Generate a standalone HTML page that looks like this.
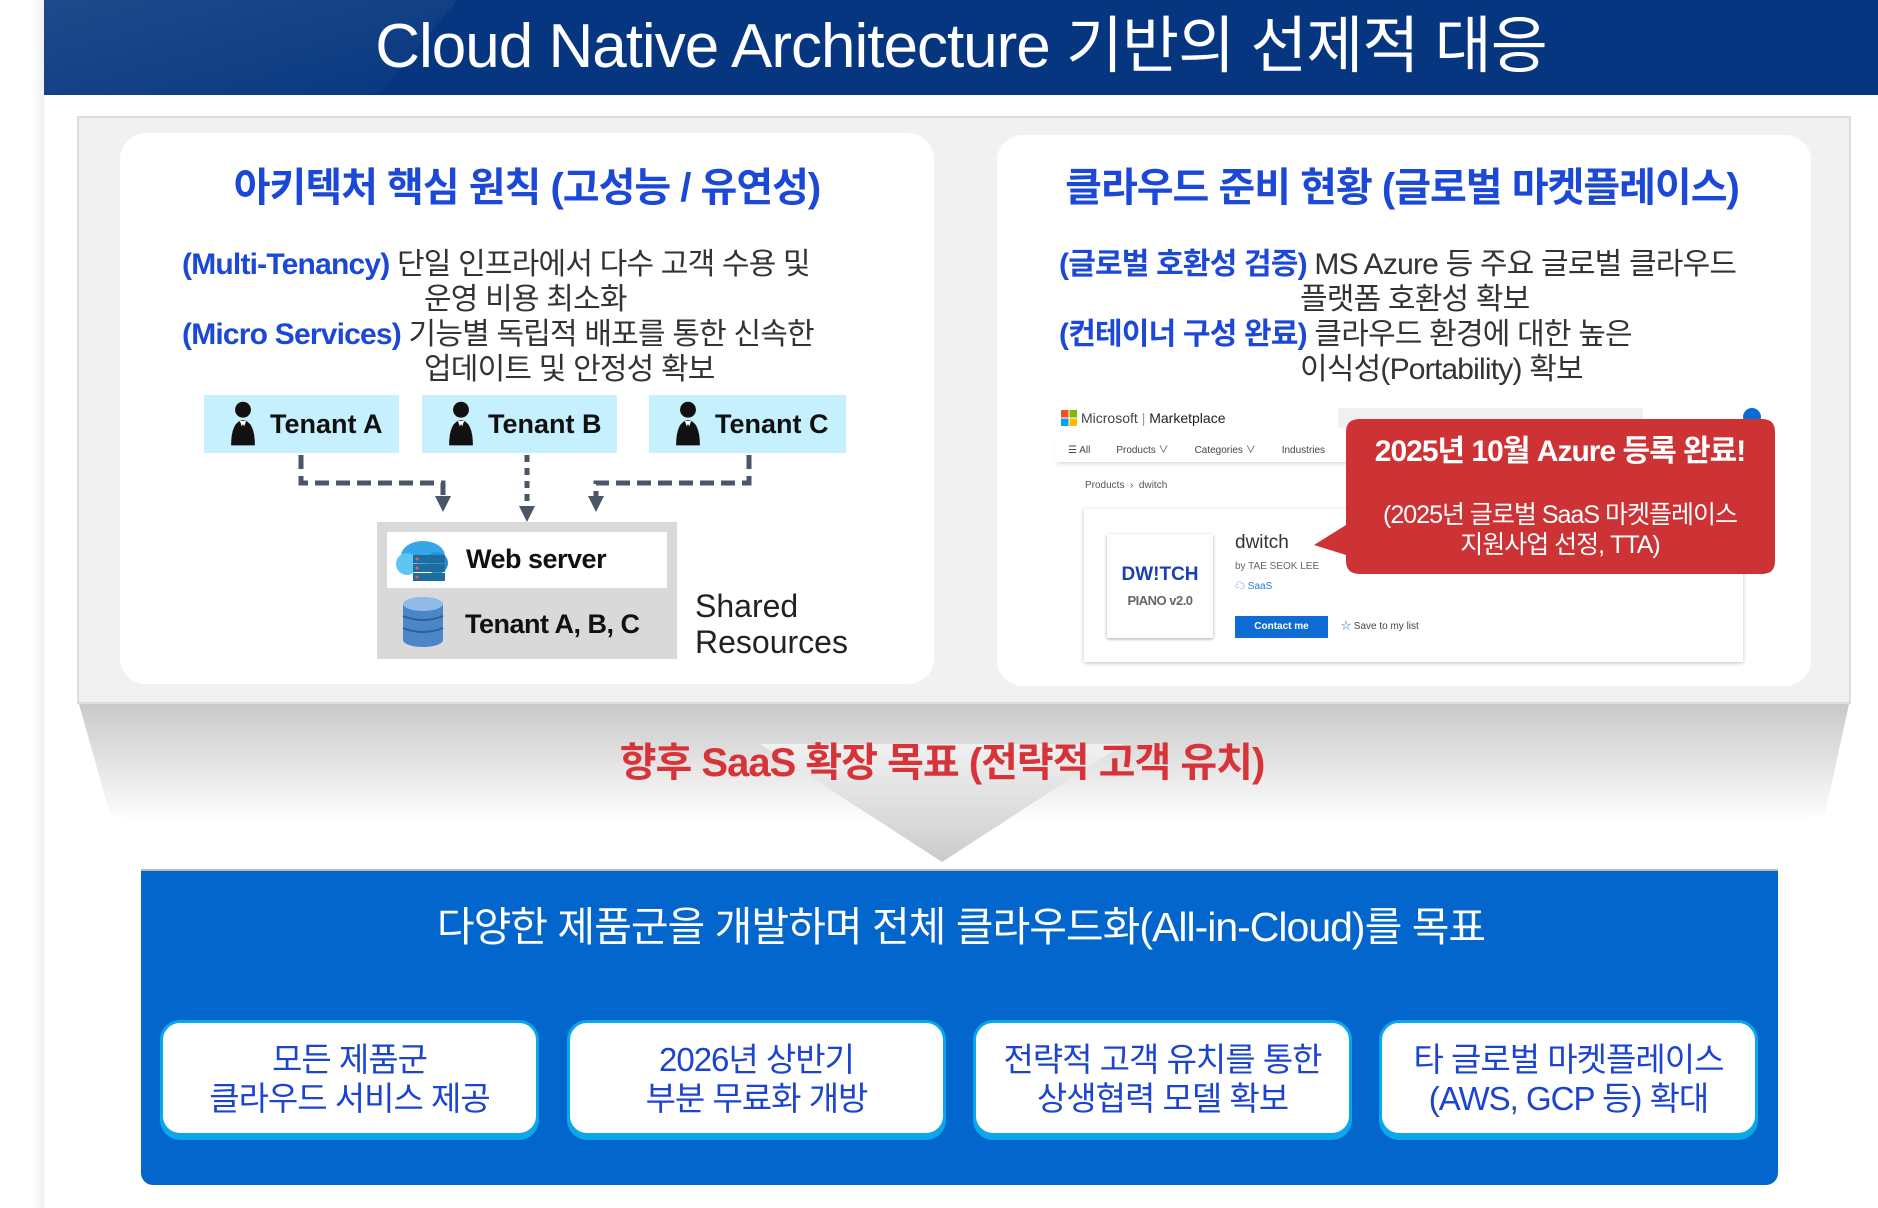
<!DOCTYPE html>
<html><head><meta charset="utf-8"><style>
*{margin:0;padding:0;box-sizing:border-box}
body{width:1878px;height:1208px;background:#fff;position:relative;overflow:hidden;font-family:"Liberation Sans","Noto Sans CJK KR",sans-serif}
.a{position:absolute}
.t{position:absolute;white-space:nowrap;line-height:1}
.c{transform:translateX(-50%)}
.blue{color:#1b48d6;font-weight:bold}
.g{color:#333}
.tenant{position:absolute;top:395px;height:58px;background:#c6f0fd;font-weight:bold;font-size:27px;color:#111;display:flex;align-items:center;padding-left:22px;gap:10px}
.box{position:absolute;top:1020px;width:379px;height:116px;background:#fff;border:3px solid #0aa7ea;border-radius:20px;box-shadow:0 4px 0 #0aa7ea;color:#1c44cf;font-size:33px;text-align:center;line-height:39px;padding-top:17px;letter-spacing:-1px}
</style></head><body>
<div class="a" style="left:0;top:0;width:44px;height:1208px;background:linear-gradient(90deg,#fff 70%,#f0f0f0)"></div>
<div class="a" style="left:44px;top:0;width:1834px;height:95px;background:#06367f;overflow:hidden">
 <div class="a" style="left:-40px;top:-60px;width:420px;height:200px;background:linear-gradient(160deg,rgba(255,255,255,.12),rgba(255,255,255,0));transform:skewX(-40deg)"></div>
</div>
<div class="t c" style="left:961px;top:16px;font-size:62px;color:#fff;letter-spacing:-1px">Cloud Native Architecture 기반의 선제적 대응</div>

<div class="a" style="left:77px;top:116px;width:1774px;height:588px;background:#f1f1f1;border:2px solid #dcdcdc"></div>
<div class="a" style="left:120px;top:133px;width:814px;height:551px;background:#fff;border-radius:26px"></div>
<div class="a" style="left:997px;top:135px;width:814px;height:551px;background:#fff;border-radius:26px"></div>

<div class="t c blue" style="left:527px;top:168px;font-size:40px;letter-spacing:-1px">아키텍처 핵심 원칙 (고성능 / 유연성)</div>
<div class="t" style="left:182px;top:250px;font-size:30px;letter-spacing:-.8px"><span class="blue">(Multi-Tenancy)</span> <span class="g">단일 인프라에서 다수 고객 수용 및</span></div>
<div class="t g" style="left:424px;top:285px;font-size:30px;letter-spacing:-.8px">운영 비용 최소화</div>
<div class="t" style="left:182px;top:320px;font-size:30px;letter-spacing:-.8px"><span class="blue">(Micro Services)</span> <span class="g">기능별 독립적 배포를 통한 신속한</span></div>
<div class="t g" style="left:424px;top:355px;font-size:30px;letter-spacing:-.8px">업데이트 및 안정성 확보</div>

<svg width="0" height="0" style="position:absolute"><defs><symbol id="p" viewBox="0 0 34 58"><circle cx="17" cy="11" r="10" fill="#111"/><path d="M2 56 Q2 26 17 24 Q32 26 32 56 Z" fill="#111"/><path d="M13 25 L17 36 L21 25 Z" fill="#fff"/><path d="M16 30 L18 30 L19 46 L17 49 L15 46 Z" fill="#111"/></symbol></defs></svg>
<div class="tenant" style="left:204px;width:195px"><svg width="34" height="46"><use href="#p"/></svg>Tenant A</div>
<div class="tenant" style="left:422px;width:195px"><svg width="34" height="46"><use href="#p"/></svg>Tenant B</div>
<div class="tenant" style="left:649px;width:197px"><svg width="34" height="46"><use href="#p"/></svg>Tenant C</div>

<svg class="a" style="left:0;top:0" width="1878" height="700">
 <g stroke="#4a5568" stroke-width="5" fill="none">
  <path d="M301 455 V483 H443 V498" stroke-dasharray="14 7"/>
  <path d="M527 455 V510" stroke-dasharray="7 6"/>
  <path d="M749 455 V483 H596 V498" stroke-dasharray="14 7"/>
 </g>
 <g fill="#4a5568"><path d="M435 496 L451 496 L443 512Z"/><path d="M519 506 L535 506 L527 522Z"/><path d="M588 496 L604 496 L596 512Z"/></g>
</svg>

<div class="a" style="left:377px;top:522px;width:300px;height:137px;background:#d9d9d9"></div>
<div class="a" style="left:387px;top:532px;width:280px;height:56px;background:#fff"></div>
<svg class="a" style="left:393px;top:538px" width="58" height="46"><ellipse cx="30" cy="18" rx="22" ry="15" fill="#35a6e8"/><circle cx="14" cy="26" r="11" fill="#5ec4f2"/><circle cx="44" cy="25" r="11" fill="#2a8fd6"/><rect x="20" y="17" width="32" height="8" fill="#1d6e9e"/><rect x="20" y="26" width="32" height="8" fill="#1d6e9e"/><rect x="20" y="35" width="32" height="8" fill="#1d6e9e"/><g fill="#f55"><circle cx="24" cy="21" r="1.5"/><circle cx="24" cy="30" r="1.5"/><circle cx="24" cy="39" r="1.5"/></g></svg>
<div class="t" style="left:466px;top:546px;font-size:27px;font-weight:bold;color:#111;letter-spacing:-.5px">Web server</div>
<svg class="a" style="left:401px;top:596px" width="44" height="54"><g fill="#4a86c8"><ellipse cx="22" cy="44" rx="20" ry="7"/><rect x="2" y="8" width="40" height="36"/></g><ellipse cx="22" cy="8" rx="20" ry="7" fill="#8fb9e6"/><g stroke="#2e5f99" stroke-width="2" fill="none"><path d="M2 20 Q22 28 42 20"/><path d="M2 32 Q22 40 42 32"/></g></svg>
<div class="t" style="left:465px;top:611px;font-size:27px;font-weight:bold;color:#111;letter-spacing:-.5px">Tenant A, B, C</div>
<div class="t" style="left:695px;top:588px;font-size:32px;color:#222;line-height:36px">Shared<br>Resources</div>

<div class="t c blue" style="left:1402px;top:168px;font-size:40px;letter-spacing:-1px">클라우드 준비 현황 (글로벌 마켓플레이스)</div>
<div class="t" style="left:1059px;top:250px;font-size:30px;letter-spacing:-.8px"><span class="blue">(글로벌 호환성 검증)</span> <span class="g">MS Azure 등 주요 글로벌 클라우드</span></div>
<div class="t g" style="left:1300px;top:285px;font-size:30px;letter-spacing:-.8px">플랫폼 호환성 확보</div>
<div class="t" style="left:1059px;top:320px;font-size:30px;letter-spacing:-.8px"><span class="blue">(컨테이너 구성 완료)</span> <span class="g">클라우드 환경에 대한 높은</span></div>
<div class="t g" style="left:1300px;top:355px;font-size:30px;letter-spacing:-.8px">이식성(Portability) 확보</div>

<svg class="a" style="left:1061px;top:410px" width="16" height="16"><rect width="7.5" height="7.5" fill="#f25022"/><rect x="8.5" width="7.5" height="7.5" fill="#7fba00"/><rect y="8.5" width="7.5" height="7.5" fill="#00a4ef"/><rect x="8.5" y="8.5" width="7.5" height="7.5" fill="#ffb900"/></svg>
<div class="t" style="left:1081px;top:411px;font-size:14px;color:#444">Microsoft <span style="color:#999">|</span> <span style="color:#222">Marketplace</span></div>
<div class="a" style="left:1338px;top:408px;width:305px;height:20px;background:#f0f0f0"></div>
<div class="a" style="left:1743px;top:408px;width:18px;height:18px;border-radius:50%;background:#0a6cd6"></div>
<div class="a" style="left:1055px;top:430px;width:300px;height:32px;box-shadow:0 4px 4px -2px #ddd"></div>
<div class="t" style="left:1068px;top:446px;font-size:10px;color:#444">☰ All<span style="margin-left:26px">Products ∨</span><span style="margin-left:26px">Categories ∨</span><span style="margin-left:26px">Industries</span></div>
<div class="t" style="left:1085px;top:481px;font-size:10px;color:#555">Products &nbsp;›&nbsp; dwitch</div>
<div class="a" style="left:1084px;top:509px;width:659px;height:153px;background:#fff;box-shadow:0 1px 4px rgba(0,0,0,.25)"></div>
<div class="a" style="left:1107px;top:534px;width:106px;height:104px;background:#fff;box-shadow:0 1px 3px rgba(0,0,0,.35)"></div>
<div class="t c" style="left:1160px;top:565px;font-size:19px;font-weight:bold;color:#1a3fae">DW!TCH</div>
<div class="t c" style="left:1160px;top:594px;font-size:13px;color:#666;font-weight:bold;letter-spacing:-.5px">PIANO v2.0</div>
<div class="t" style="left:1235px;top:533px;font-size:19px;color:#333">dwitch</div>
<div class="t" style="left:1235px;top:562px;font-size:10px;color:#666">by TAE SEOK LEE</div>
<div class="t" style="left:1235px;top:582px;font-size:10px;color:#2d7ad6">☁ SaaS</div>
<div class="a" style="left:1235px;top:616px;width:93px;height:22px;background:#0f6cd4;color:#fff;font-size:10px;font-weight:bold;text-align:center;line-height:22px">Contact me</div>
<div class="t" style="left:1341px;top:622px;font-size:10px;color:#444"><span style="color:#2d7ad6">☆</span> Save to my list</div>

<svg class="a" style="left:1310px;top:415px" width="470" height="164"><path d="M36 4 H452 Q465 4 465 17 V146 Q465 159 452 159 H50 Q36 159 36 146 V140 L4 130 L36 110 V17 Q36 4 50 4Z" fill="#cd3235"/></svg>
<div class="t c" style="left:1560px;top:437px;font-size:30px;font-weight:bold;color:#fff;letter-spacing:-1px">2025년 10월 Azure 등록 완료!</div>
<div class="t c" style="left:1560px;top:500px;font-size:25px;color:#fff;letter-spacing:-1px;line-height:30px;text-align:center">(2025년 글로벌 SaaS 마켓플레이스<br>지원사업 선정, TTA)</div>

<svg class="a" style="left:0;top:704px" width="1878" height="170">
 <defs>
  <linearGradient id="fg" x1="0" y1="0" x2="0" y2="1"><stop offset="0" stop-color="#c9c9c9"/><stop offset=".75" stop-color="#fff"/><stop offset="1" stop-color="#fff"/></linearGradient>
  <linearGradient id="tg" x1="0" y1="0" x2="0" y2="1"><stop offset="0" stop-color="#f6f6f6"/><stop offset="1" stop-color="#bdbdbd"/></linearGradient>
 </defs>
 <path d="M79 0 H1849 L1825 110 Q1560 160 942 160 Q320 160 110 110Z" fill="url(#fg)"/>
 <path d="M760 40 H1124 L942 158Z" fill="url(#tg)" opacity=".8"/>
</svg>
<div class="t c" style="left:942px;top:743px;font-size:40px;font-weight:bold;color:#d7343a;letter-spacing:-1px">향후 SaaS 확장 목표 (전략적 고객 유치)</div>

<div class="a" style="left:141px;top:869px;width:1637px;height:316px;background:#0366cc;border-top:2px solid #bbb;border-radius:0 0 12px 12px"></div>
<div class="t c" style="left:961px;top:907px;font-size:41px;color:#fff;letter-spacing:-1px">다양한 제품군을 개발하며 전체 클라우드화(All-in-Cloud)를 목표</div>

<div class="box" style="left:160px">모든 제품군<br>클라우드 서비스 제공</div>
<div class="box" style="left:567px">2026년 상반기<br>부분 무료화 개방</div>
<div class="box" style="left:973px">전략적 고객 유치를 통한<br>상생협력 모델 확보</div>
<div class="box" style="left:1379px">타 글로벌 마켓플레이스<br>(AWS, GCP 등) 확대</div>
</body></html>
